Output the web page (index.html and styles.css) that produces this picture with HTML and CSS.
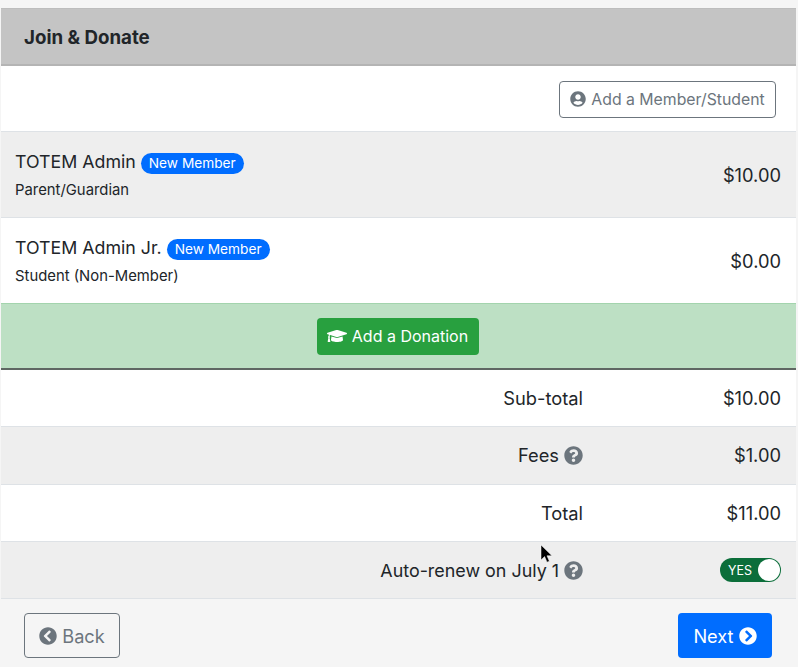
FILE: index.html
```html
<!DOCTYPE html>
<html lang="en">
<head>
<meta charset="utf-8">
<title>Join &amp; Donate</title>
<link rel="stylesheet" href="styles.css">
</head>
<body>
<main class="panel">
  <header class="panel-head"><h1>Join &amp; Donate</h1></header>

  <div class="row row-action">
    <button class="btn btn-outline btn-sm" type="button">
      <svg class="icon" viewBox="0 0 496 512"><path fill="currentColor" d="M248 8C111 8 0 119 0 256s111 248 248 248 248-111 248-248S385 8 248 8zm0 96c48.6 0 88 39.4 88 88s-39.4 88-88 88-88-39.4-88-88 39.4-88 88-88zm0 344c-58.7 0-111.3-26.6-146.5-68.2 18.8-35.4 55.6-59.8 98.5-59.8 2.4 0 4.8.4 7.1 1.1 13 4.2 26.6 6.9 40.9 6.9 14.3 0 28-2.7 40.9-6.9 2.3-.7 4.7-1.1 7.1-1.1 42.9 0 79.7 24.4 98.5 59.8C359.3 421.4 306.7 448 248 448z"/></svg>
      Add a Member/Student
    </button>
  </div>

  <div class="row row-member row-alt">
    <div class="member">
      <div class="member-name">TOTEM Admin <span class="badge">New Member</span></div>
      <div class="member-role">Parent/Guardian</div>
    </div>
    <div class="amount">$10.00</div>
  </div>

  <div class="row row-member row-member-last">
    <div class="member">
      <div class="member-name">TOTEM Admin Jr. <span class="badge">New Member</span></div>
      <div class="member-role">Student (Non-Member)</div>
    </div>
    <div class="amount">$0.00</div>
  </div>

  <div class="row row-donate">
    <button class="btn btn-success" type="button">
      <svg class="icon icon-cap" viewBox="0 0 640 512"><path fill="currentColor" d="M622.34 153.2L343.4 67.5c-15.2-4.67-31.6-4.67-46.79 0L17.66 153.2c-23.54 7.23-23.54 38.36 0 45.59l48.63 14.94c-10.67 13.19-17.23 29.28-17.88 46.9C38.78 266.15 32 276.11 32 288c0 10.78 5.68 19.85 13.86 25.65L20.33 428.53C18.11 438.52 25.71 448 35.94 448h56.11c10.24 0 17.84-9.48 15.62-19.47L82.14 313.65C90.32 307.85 96 298.78 96 288c0-11.57-6.47-21.25-15.66-26.87.76-15.02 8.44-28.3 20.69-36.72L296.6 284.5c9.06 2.78 26.44 6.25 46.79 0l278.95-85.7c23.55-7.24 23.55-38.36 0-45.6zM352.79 315.09c-28.53 8.76-52.84 3.92-65.59 0l-145.02-44.55L128 384c0 35.35 85.96 64 192 64s192-28.65 192-64l-14.18-113.47-145.03 44.56z"/></svg>
      Add a Donation
    </button>
  </div>

  <div class="row row-sum">
    <div class="sum-label">Sub-total</div>
    <div class="sum-value">$10.00</div>
  </div>
  <div class="row row-sum row-alt">
    <div class="sum-label">Fees
      <svg class="icon icon-help" viewBox="0 0 512 512"><path fill="currentColor" d="M504 256c0 136.997-111.043 248-248 248S8 392.997 8 256C8 119.083 119.043 8 256 8s248 111.083 248 248zM262.655 90c-54.497 0-89.255 22.957-116.549 63.758-3.536 5.286-2.353 12.415 2.715 16.258l34.699 26.31c5.205 3.947 12.621 3.008 16.665-2.122 17.864-22.658 30.113-35.797 57.303-35.797 20.429 0 45.698 13.148 45.698 32.958 0 14.976-12.363 22.667-32.534 33.976C247.128 238.528 216 254.941 216 296v4c0 6.627 5.373 12 12 12h56c6.627 0 12-5.373 12-12v-1.333c0-28.462 83.186-29.647 83.186-106.667 0-58.002-60.165-102-116.531-102zM256 338c-25.365 0-46 20.635-46 46 0 25.364 20.635 46 46 46s46-20.636 46-46c0-25.365-20.635-46-46-46z"/></svg>
    </div>
    <div class="sum-value">$1.00</div>
  </div>
  <div class="row row-sum">
    <div class="sum-label">Total</div>
    <div class="sum-value">$11.00</div>
  </div>
  <div class="row row-sum row-alt">
    <div class="sum-label sum-label-long">Auto-renew on July 1
      <svg class="icon icon-help" viewBox="0 0 512 512"><path fill="currentColor" d="M504 256c0 136.997-111.043 248-248 248S8 392.997 8 256C8 119.083 119.043 8 256 8s248 111.083 248 248zM262.655 90c-54.497 0-89.255 22.957-116.549 63.758-3.536 5.286-2.353 12.415 2.715 16.258l34.699 26.31c5.205 3.947 12.621 3.008 16.665-2.122 17.864-22.658 30.113-35.797 57.303-35.797 20.429 0 45.698 13.148 45.698 32.958 0 14.976-12.363 22.667-32.534 33.976C247.128 238.528 216 254.941 216 296v4c0 6.627 5.373 12 12 12h56c6.627 0 12-5.373 12-12v-1.333c0-28.462 83.186-29.647 83.186-106.667 0-58.002-60.165-102-116.531-102zM256 338c-25.365 0-46 20.635-46 46 0 25.364 20.635 46 46 46s46-20.636 46-46c0-25.365-20.635-46-46-46z"/></svg>
    </div>
    <div class="sum-value">
      <span class="toggle"><span class="toggle-text">YES</span><span class="toggle-knob"></span></span>
    </div>
  </div>

  <footer class="panel-foot">
    <button class="btn btn-outline btn-lg" type="button">
      <svg class="icon icon-chev" viewBox="0 0 512 512"><path fill="currentColor" d="M256 504C119 504 8 393 8 256S119 8 256 8s248 111 248 248-111 248-248 248zM142.1 273l135.5 135.5c9.4 9.4 24.6 9.4 33.9 0l17-17c9.4-9.4 9.4-24.6 0-33.9L226.9 256l101.6-101.6c9.4-9.4 9.4-24.6 0-33.9l-17-17c-9.4-9.4-24.6-9.4-33.9 0L142.1 239c-9.4 9.4-9.4 24.6 0 34z"/></svg>
      Back
    </button>
    <button class="btn btn-primary btn-lg" type="button">
      Next
      <svg class="icon icon-chev" viewBox="0 0 512 512"><path fill="currentColor" d="M256 8c137 0 248 111 248 248S393 504 256 504 8 393 8 256 119 8 256 8zm113.9 231L234.4 103.5c-9.4-9.4-24.6-9.4-33.9 0l-17 17c-9.4 9.4-9.4 24.6 0 33.9L285.1 256 183.5 357.6c-9.4 9.4-9.4 24.6 0 33.9l17 17c9.4 9.4 24.6 9.4 33.9 0L369.9 273c9.4-9.4 9.4-24.6 0-34z"/></svg>
    </button>
  </footer>
</main>
<svg class="cursor" viewBox="0 0 12 18"><path d="M1 0v15l3.6-3.4 2.4 5.6 2.4-1-2.4-5.4h5z" fill="#000" stroke="#fff" stroke-width=".5"/></svg>
</body>
</html>
```
FILE: styles.css
```css
* { box-sizing: border-box; }
html, body { height: 100%; }
body {
  margin: 0;
  background: #f5f5f5;
  color: #212529;
  font-family: Inter, "Liberation Sans", sans-serif;
  font-size: 18.3px;
  overflow: hidden;
  position: relative;
}
.panel {
  margin: 8px 2px 0 1px;
  display: flex;
  flex-direction: column;
}
.panel-head {
  height: 58px;
  background: #c4c4c4;
  border-top: 1px solid #bdbdbd;
  border-bottom: 2px solid #b4b4b4;
  padding: 3px 23px 0;
  display: flex;
  align-items: center;
}
.panel-head h1 { margin: 0; font-size: 18.7px; font-weight: 700; line-height: 1; }
.row {
  display: flex;
  align-items: center;
  background: #fff;
  border-bottom: 1px solid #dee2e6;
}
.row-alt { background: #eee; }
.row-action { height: 66px; justify-content: flex-end; padding-right: 20px; }
.row-member { height: 86px; justify-content: space-between; padding: 0 15px 0 14px; }
.row-member-last { height: 85px; border-bottom: 0; }
.row-donate {
  height: 67px;
  justify-content: center;
  background: #bde0c4;
  border-top: 1px solid #a3d4ad;
  border-bottom: 2px solid #5f6763;
}
.row-sum { height: 57.3px; }
.sum-label { width: 582px; display: flex; justify-content: flex-end; align-items: center; gap: 5px; }
.sum-label-long { font-size: 17.9px; }
.sum-value { flex: 1; display: flex; justify-content: flex-end; padding-right: 15px; }
.member-name { display: flex; align-items: center; gap: 5px; line-height: 26px; font-size: 17.8px; }
.member-role { font-size: 14.85px; line-height: 20px; margin-top: 5px; }
.badge {
  background: #006dff;
  color: #fff;
  font-size: 13.7px;
  line-height: 21px;
  border-radius: 11px;
  padding: 0 8px;
  margin-top: 2px;
}
.btn {
  display: inline-flex;
  align-items: center;
  justify-content: center;
  gap: 5px;
  border: 1px solid transparent;
  font: inherit;
  border-radius: 4px;
  padding: 0;
}
.btn-sm { width: 217px; height: 37px; font-size: 15.8px; }
.btn-outline { background: transparent; color: #6c757d; border-color: #6c757d; }
.row-action .btn-outline { background: #fff; margin-top: 1px; }
.btn-success { background: #28a03f; color: #fff; width: 162px; height: 37px; font-size: 16px; margin-left: -2px; }
.btn-primary { background: #006dff; color: #fff; width: 94px; height: 45px; }
.btn-lg { height: 45px; font-size: 18.2px; }
.panel-foot .btn-outline { width: 96px; }
.panel-foot {
  height: 68px;
  background: #f5f5f5;
  padding: 14px 24px 0 23px;
  display: flex;
  justify-content: space-between;
  align-items: flex-start;
}
.icon { width: 16px; height: 16px; flex: none; }
.icon-cap { width: 20px; }
.icon-help { width: 19px; height: 19px; color: #6c757d; }
.icon-chev { width: 18px; height: 18px; }
.toggle {
  width: 61px;
  height: 24px;
  background: #0b6e3a;
  border-radius: 12px;
  display: flex;
  align-items: center;
  justify-content: space-between;
  padding: 0 1px 0 8px;
}
.toggle-text { color: #fff; font-size: 12.5px; }
.toggle-knob { width: 22px; height: 22px; border-radius: 50%; background: #fff; }
.cursor { position: absolute; left: 540px; top: 545px; width: 12px; height: 18px; }
```
